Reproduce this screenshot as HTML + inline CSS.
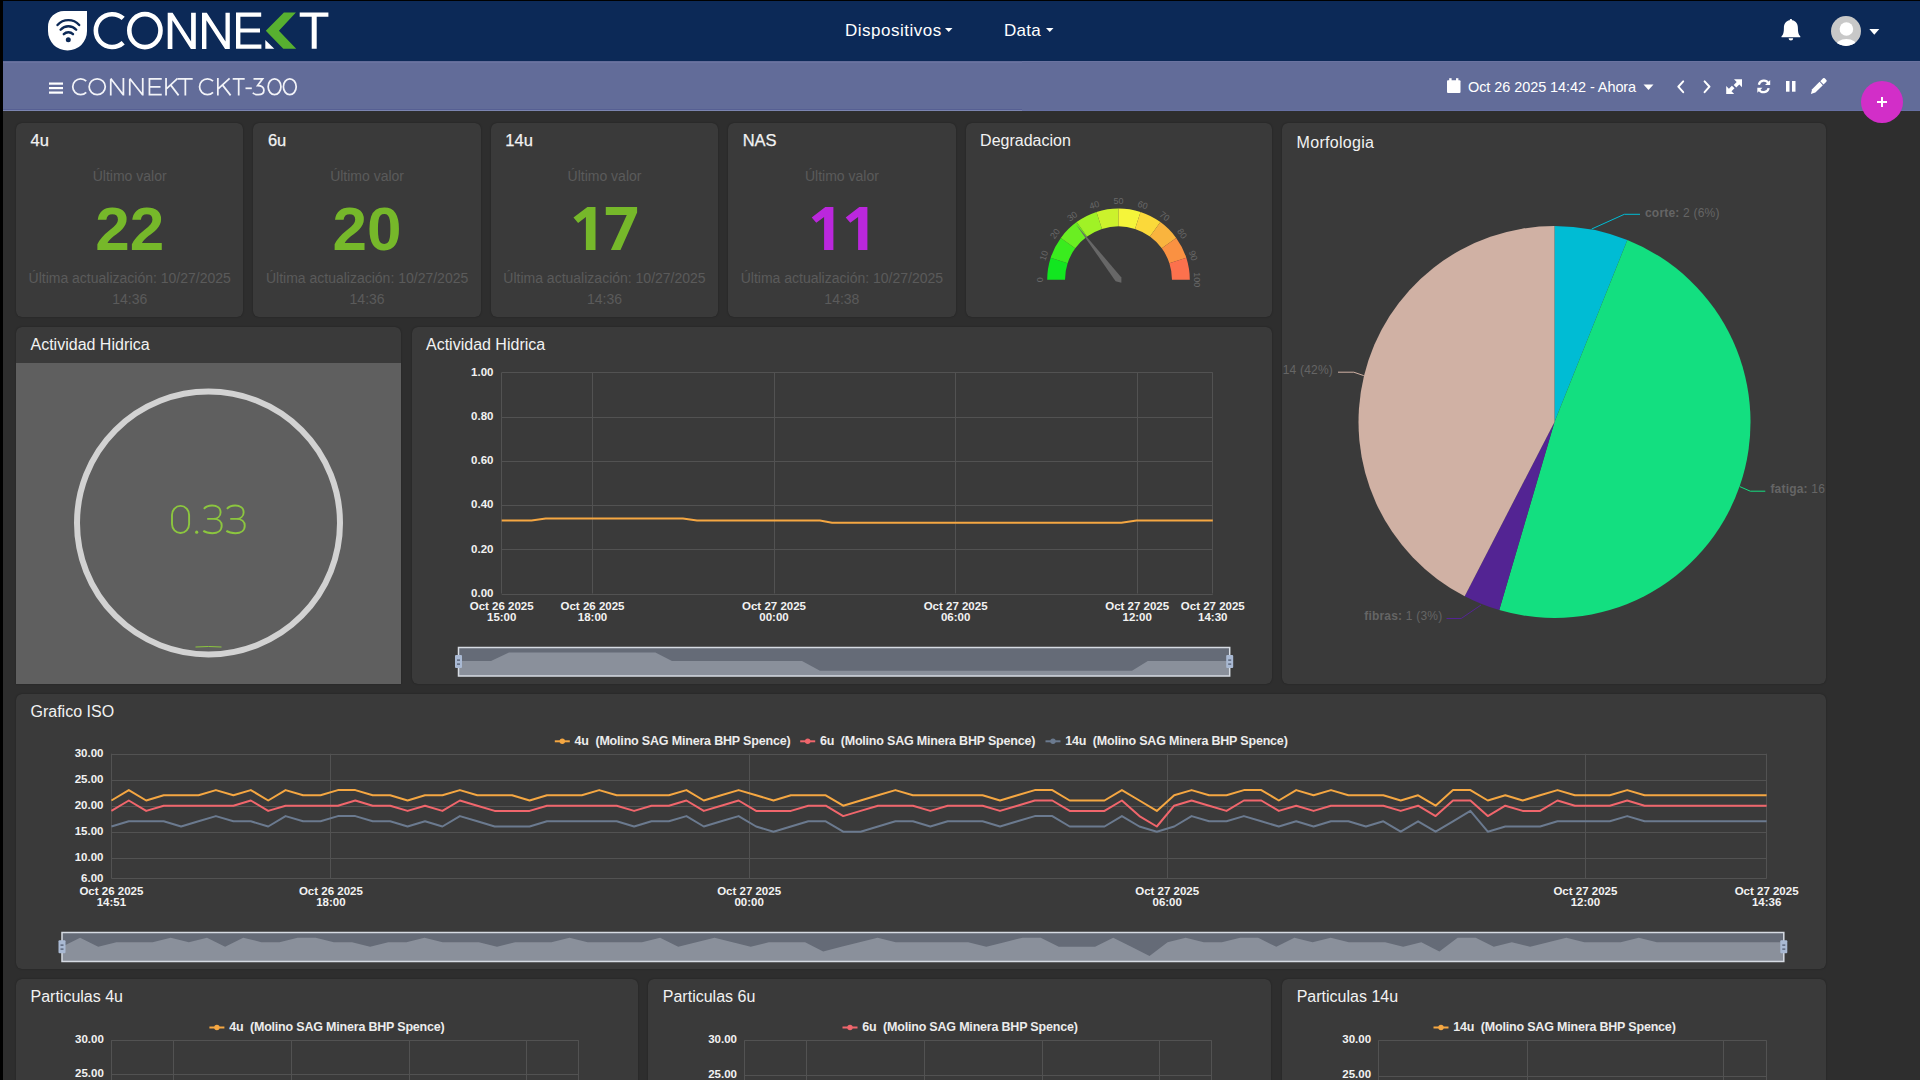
<!DOCTYPE html>
<html><head><meta charset="utf-8"><title>CONNEKT CKT-300</title>
<style>
*{margin:0;padding:0;box-sizing:border-box}
html,body{width:1920px;height:1080px;overflow:hidden;background:#2e2e2e;font-family:"Liberation Sans", sans-serif}
.abs{position:absolute}
.pn{position:absolute;background:#3a3a3a;border-radius:6px;overflow:hidden;box-shadow:0 0 1.5px rgba(0,0,0,0.45)}
.tt{position:absolute;left:14.5px;top:9px;color:#f2f2f2;font-size:16px;white-space:nowrap}
.lbl{position:absolute;color:#5b5b5b;font-size:14px;text-align:center;white-space:nowrap}
svg{position:absolute;left:0;top:0;overflow:visible}
</style></head><body>

<div class="abs" style="left:0;top:0;width:1920px;height:1px;background:#000"></div>
<div class="abs" style="left:0;top:0;width:3px;height:1080px;background:#000"></div>
<div class="abs" style="left:3px;top:1px;width:1917px;height:60px;background:#0c2957"></div>
<div class="abs" style="left:3px;top:61px;width:1917px;height:50px;background:#626c99"></div>
<div class="abs" style="left:3px;top:109px;width:1019px;height:1px;background:#565f93"></div>
<div class="abs" style="left:3px;top:110px;width:1019px;height:1px;background:#7c85b0"></div>
<div class="abs" style="left:1022px;top:110px;width:898px;height:1px;background:#6670a3"></div>
<div class="abs" style="left:3px;top:62px;width:1019px;height:1px;background:#6a73a0"></div>
<div class="abs" style="left:1022px;top:61px;width:898px;height:1px;background:#6a73a0"></div>
<svg width="1920" height="62" style="left:0;top:0">
<path d="M87,10.9 V31.1 A19.5,19.5 0 0 1 48,31.1 V27 A16,16 0 0 1 64,10.9 Z" fill="#fff"/>
<g fill="none" stroke="#0c2957" stroke-width="2.4" stroke-linecap="round">
<path d="M63.8,34.2 A6.5,6.5 0 0 1 73,34.2"/>
<path d="M60.6,29.7 A10.6,10.6 0 0 1 76.2,29.7"/>
<path d="M57.5,25 A14.5,14.5 0 0 1 79.2,25"/>
</g>
<circle cx="68.3" cy="39.7" r="2.5" fill="#0c2957"/>
<g fill="none" stroke="#fff" stroke-width="4.6">
<path d="M123.2,18.4 A16.4,16.4 0 1 0 123.2,42.8"/>
<ellipse cx="144.9" cy="30.6" rx="15.6" ry="16.5"/>
</g>
<g fill="#fff">
<path d="M167.7,49 V12.7 H172.6 L191.1,41.5 V12.7 H195.8 V49 H190.9 L172.4,20.2 V49 Z"/>
<path d="M202,49 V12.7 H206.8 L225.5,41.5 V12.7 H229.8 V49 H225.1 L206.4,20.2 V49 Z"/>
<path d="M236,12.6 H261.2 V16.75 H240.4 V28.5 H260 V32.6 H240.4 V44.4 H261.4 V48.7 H236 Z"/>
<path d="M265.3,40 V48.7 H274.3 Z"/>
<path d="M299.7,12.6 H328.4 V16.75 H316.7 V48.7 H311.7 V16.75 H299.7 Z"/>
</g>
<path d="M283.9,12.6 H295.9 L278.9,30.7 L296.2,48.7 H283.3 L265.8,30.7 Z" fill="#57b030"/>
</svg>
<div class="abs" style="left:845px;top:21px;color:#fff;font-size:17px;letter-spacing:0.5px;white-space:nowrap">Dispositivos</div>
<svg width="10" height="6" style="left:945px;top:28px"><path d="M0,0 H7.5 L3.75,4 Z" fill="#fff"/></svg>
<div class="abs" style="left:1004px;top:21px;color:#fff;font-size:17px;letter-spacing:0.3px;white-space:nowrap">Data</div>
<svg width="10" height="6" style="left:1046px;top:28px"><path d="M0,0 H7.5 L3.75,4 Z" fill="#fff"/></svg>
<svg width="30" height="30" style="left:1776px;top:16px">
<path d="M14.9,3 C15.6,3 16.1,3.5 16.1,4.2 C20.2,4.9 21.9,8 21.9,12 C21.9,16.3 22.4,18.6 24.3,20.3 V21.2 H5.5 V20.3 C7.4,18.6 7.9,16.3 7.9,12 C7.9,8 9.6,4.9 13.7,4.2 C13.7,3.5 14.2,3 14.9,3 Z" fill="#fff"/>
<path d="M12.6,22.2 H17.2 A2.3,2.3 0 0 1 12.6,22.2 Z" fill="#fff"/>
</svg>
<svg width="32" height="32" style="left:1830px;top:15px">
<defs><clipPath id="avc"><circle cx="16" cy="16" r="15"/></clipPath></defs>
<circle cx="16" cy="16" r="15" fill="#c8c8c8"/>
<g clip-path="url(#avc)" fill="#fff">
<circle cx="16.4" cy="14" r="6.8"/>
<ellipse cx="16.4" cy="31.6" rx="11" ry="7.7"/>
</g></svg>
<svg width="12" height="8" style="left:1869px;top:29px"><path d="M0.3,0 H10.3 L5.3,5.8 Z" fill="#fff"/></svg>
<svg width="30" height="30" style="left:44px;top:77px">
<rect x="5" y="5.5" width="14" height="2.2" fill="#fff"/>
<rect x="5" y="10" width="14" height="2.2" fill="#fff"/>
<rect x="5" y="14.5" width="14" height="2.2" fill="#fff"/>
</svg>
<svg width="320" height="111" style="left:0;top:0">
<g fill="none" stroke="#f2f3f8" stroke-width="1.75" stroke-linejoin="miter">
<path d="M86.24,81.16 A7.9,7.9 0 1 0 86.24,92.34"/>
<ellipse cx="97.2" cy="86.75" rx="8.05" ry="7.9"/>
<path d="M110.75,95.5 V79.2 M110.75,78.5 L123.4,95 M123.4,95.5 V78"/>
<path d="M129.75,95.5 V79.2 M129.75,78.5 L142.75,95 M142.75,95.5 V78"/>
<path d="M161.75,78.85 H149.45 V94.65 H161.75 M149.45,86.75 H160.5"/>
<path d="M166.05,78 V95.5 M177.6,78.3 L166.6,88.6 M170.6,84.9 L178.6,95.4"/>
<path d="M178,78.85 H192.7 M185.35,78.85 V95.5"/>
<path d="M213.04,81.16 A7.9,7.9 0 1 0 213.04,92.34"/>
<path d="M217.85,78 V95.5 M229.6,78.3 L218.4,88.6 M222.4,84.9 L230.6,95.4"/>
<path d="M232.7,78.85 H244.7 M238.7,78.85 V95.5"/>
<path d="M245.5,88.3 H251.8"/>
<path d="M253.5,78.85 H262.6 L257.6,85.6 C261.5,85.6 263.9,87.6 263.9,90.3 C263.9,93.2 261.5,94.7 258.3,94.7 C255.9,94.7 253.9,94 252.8,92.7"/>
<ellipse cx="274.55" cy="86.75" rx="6.4" ry="7.9"/>
<ellipse cx="289.8" cy="86.75" rx="6.4" ry="7.9"/>
</g></svg>
<svg width="16" height="18" style="left:1446px;top:77px">
<rect x="1" y="3.3" width="13.5" height="12.6" rx="1" fill="#fff"/>
<rect x="3.2" y="1.2" width="2.4" height="3" fill="#fff"/><rect x="10" y="1.2" width="2.4" height="3" fill="#fff"/>
</svg>
<div class="abs" style="left:1468px;top:79px;color:#fff;font-size:14.5px;letter-spacing:-0.08px;white-space:nowrap">Oct 26 2025 14:42 - Ahora</div>
<svg width="12" height="8" style="left:1643px;top:84px"><path d="M0.5,0.5 H10.5 L5.5,6 Z" fill="#fff"/></svg>
<svg width="200" height="30" style="left:1670px;top:72px">
<g fill="none" stroke="#fff" stroke-width="2" stroke-linecap="round" stroke-linejoin="round">
<path d="M13.2,9.4 L8.3,14.7 L13.2,20.2"/>
<path d="M34.6,9.4 L39.5,14.7 L34.6,20.2"/>
</g>
<g fill="#fff">
<path d="M64,7.2 H72 V15.2 L69.3,12.5 L66.3,15.5 L63.7,12.9 L66.7,9.9 Z"/>
<path d="M56.2,22 V14 L58.9,16.7 L61.9,13.7 L64.5,16.3 L61.5,19.3 L64.2,22 Z"/>
</g>
<g transform="translate(93.75,14.4) scale(0.86) translate(-93,-15)">
<g fill="none" stroke="#fff" stroke-width="2.6">
<path d="M87.3,13 A6,6 0 0 1 98.5,11.5"/>
<path d="M98.7,17 A6,6 0 0 1 87.5,18.5"/>
</g>
<g fill="#fff">
<path d="M100.5,7.5 V13.5 H94.5 Z"/>
<path d="M85.5,22.5 V16.5 H91.5 Z"/>
</g>
</g>
<g fill="#fff">
<rect x="116" y="9" width="3.5" height="10.7"/>
<rect x="122" y="9" width="3.5" height="10.7"/>
<path d="M140.9,22 L142.14,17.3 L149.57,9.87 L152.83,13.13 L145.4,20.56 Z"/>
<path d="M150.27,9.17 L153.07,6.37 A1.2,1.2 0 0 1 154.8,6.37 L156.33,7.9 A1.2,1.2 0 0 1 156.33,9.63 L153.53,12.43 Z"/>
</g>
</svg>
<div class="abs" style="left:1861px;top:81px;width:42px;height:42px;border-radius:50%;background:#d22ec8"></div>
<svg width="42" height="42" style="left:1861px;top:81px"><rect x="16" y="20" width="10" height="2" fill="#fff"/><rect x="20" y="16" width="2" height="10" fill="#fff"/></svg>
<div class="pn" style="left:16px;top:123px;width:227.4px;height:194px;">
<div class="tt" style="font-size:16.5px;top:7.5px;-webkit-text-stroke:0.25px #f2f2f2">4u</div>
<div class="lbl" style="left:0;width:227.4px;top:45px">Último valor</div>
<div class="lbl" style="left:0;width:227.4px;top:71px;font-size:62px;font-weight:bold;color:#76b82a;line-height:70px">22</div>
<div class="lbl" style="left:0;width:227.4px;top:145px;line-height:21px">Última actualización: 10/27/2025<br>14:36</div>
</div>
<div class="pn" style="left:253.4px;top:123px;width:227.4px;height:194px;">
<div class="tt" style="font-size:16.5px;top:7.5px;-webkit-text-stroke:0.25px #f2f2f2">6u</div>
<div class="lbl" style="left:0;width:227.4px;top:45px">Último valor</div>
<div class="lbl" style="left:0;width:227.4px;top:71px;font-size:62px;font-weight:bold;color:#76b82a;line-height:70px">20</div>
<div class="lbl" style="left:0;width:227.4px;top:145px;line-height:21px">Última actualización: 10/27/2025<br>14:36</div>
</div>
<div class="pn" style="left:490.8px;top:123px;width:227.4px;height:194px;">
<div class="tt" style="font-size:16.5px;top:7.5px;-webkit-text-stroke:0.25px #f2f2f2">14u</div>
<div class="lbl" style="left:0;width:227.4px;top:45px">Último valor</div>
<div class="lbl" style="left:0;width:227.4px;top:145px;line-height:21px">Última actualización: 10/27/2025<br>14:36</div>
</div>
<div class="pn" style="left:728.2px;top:123px;width:227.4px;height:194px;">
<div class="tt" style="font-size:16.5px;top:7.5px;-webkit-text-stroke:0.25px #f2f2f2">NAS</div>
<div class="lbl" style="left:0;width:227.4px;top:45px">Último valor</div>
<div class="lbl" style="left:0;width:227.4px;top:145px;line-height:21px">Última actualización: 10/27/2025<br>14:38</div>
</div>
<svg width="1920" height="300" style="left:0;top:0"><polygon points="825.3,207.0 833.4,207.0 833.4,249.9 824.1,249.9 824.1,217.0 816.3,222.8 811.7,217.6" fill="#bb27dd"/><polygon points="859.3,207.0 867.4,207.0 867.4,249.9 858.1,249.9 858.1,217.0 850.3,222.8 845.7,217.6" fill="#bb27dd"/><polygon points="587.4,207 595.5,207 595.5,249.9 585.9,249.9 585.9,217 578.1,223 573.5,217.6" fill="#76b82a"/><polygon points="605.8,207 637.1,207 637.1,212.5 620.5,249.9 610.9,249.9 626.8,214.9 605.8,214.9" fill="#76b82a"/></svg>
<div class="pn" style="left:965.6px;top:123px;width:306.4px;height:194px;">
<div class="tt">Degradacion</div>
</div>
<svg width="1920" height="1080" style="left:0;top:0">
<path d="M1047.20,279.80 A71.3,71.3 0 0 1 1050.69,257.77 L1067.62,263.27 A53.5,53.5 0 0 0 1065.00,279.80 Z" fill="#12e620"/>
<path d="M1050.69,257.77 A71.3,71.3 0 0 1 1060.82,237.89 L1075.22,248.35 A53.5,53.5 0 0 0 1067.62,263.27 Z" fill="#3aec1e"/>
<path d="M1060.82,237.89 A71.3,71.3 0 0 1 1076.59,222.12 L1087.05,236.52 A53.5,53.5 0 0 0 1075.22,248.35 Z" fill="#6aee22"/>
<path d="M1076.59,222.12 A71.3,71.3 0 0 1 1096.47,211.99 L1101.97,228.92 A53.5,53.5 0 0 0 1087.05,236.52 Z" fill="#a0f226"/>
<path d="M1096.47,211.99 A71.3,71.3 0 0 1 1118.50,208.50 L1118.50,226.30 A53.5,53.5 0 0 0 1101.97,228.92 Z" fill="#cbf22c"/>
<path d="M1118.50,208.50 A71.3,71.3 0 0 1 1140.53,211.99 L1135.03,228.92 A53.5,53.5 0 0 0 1118.50,226.30 Z" fill="#f5f53a"/>
<path d="M1140.53,211.99 A71.3,71.3 0 0 1 1160.41,222.12 L1149.95,236.52 A53.5,53.5 0 0 0 1135.03,228.92 Z" fill="#fbd93a"/>
<path d="M1160.41,222.12 A71.3,71.3 0 0 1 1176.18,237.89 L1161.78,248.35 A53.5,53.5 0 0 0 1149.95,236.52 Z" fill="#f9b43e"/>
<path d="M1176.18,237.89 A71.3,71.3 0 0 1 1186.31,257.77 L1169.38,263.27 A53.5,53.5 0 0 0 1161.78,248.35 Z" fill="#fa9142"/>
<path d="M1186.31,257.77 A71.3,71.3 0 0 1 1189.80,279.80 L1172.00,279.80 A53.5,53.5 0 0 0 1169.38,263.27 Z" fill="#fc714d"/>
<text x="1040.00" y="279.80" transform="rotate(-90.0 1040.00 279.80)" text-anchor="middle" dominant-baseline="central" font-size="9" fill="#686868" font-family='Liberation Sans, sans-serif'>0</text>
<text x="1043.84" y="255.54" transform="rotate(-72.0 1043.84 255.54)" text-anchor="middle" dominant-baseline="central" font-size="9" fill="#686868" font-family='Liberation Sans, sans-serif'>10</text>
<text x="1054.99" y="233.66" transform="rotate(-54.0 1054.99 233.66)" text-anchor="middle" dominant-baseline="central" font-size="9" fill="#686868" font-family='Liberation Sans, sans-serif'>20</text>
<text x="1072.36" y="216.29" transform="rotate(-36.0 1072.36 216.29)" text-anchor="middle" dominant-baseline="central" font-size="9" fill="#686868" font-family='Liberation Sans, sans-serif'>30</text>
<text x="1094.24" y="205.14" transform="rotate(-18.0 1094.24 205.14)" text-anchor="middle" dominant-baseline="central" font-size="9" fill="#686868" font-family='Liberation Sans, sans-serif'>40</text>
<text x="1118.50" y="201.30" transform="rotate(-0.0 1118.50 201.30)" text-anchor="middle" dominant-baseline="central" font-size="9" fill="#686868" font-family='Liberation Sans, sans-serif'>50</text>
<text x="1142.76" y="205.14" transform="rotate(18.0 1142.76 205.14)" text-anchor="middle" dominant-baseline="central" font-size="9" fill="#686868" font-family='Liberation Sans, sans-serif'>60</text>
<text x="1164.64" y="216.29" transform="rotate(36.0 1164.64 216.29)" text-anchor="middle" dominant-baseline="central" font-size="9" fill="#686868" font-family='Liberation Sans, sans-serif'>70</text>
<text x="1182.01" y="233.66" transform="rotate(54.0 1182.01 233.66)" text-anchor="middle" dominant-baseline="central" font-size="9" fill="#686868" font-family='Liberation Sans, sans-serif'>80</text>
<text x="1193.16" y="255.54" transform="rotate(72.0 1193.16 255.54)" text-anchor="middle" dominant-baseline="central" font-size="9" fill="#686868" font-family='Liberation Sans, sans-serif'>90</text>
<text x="1197.00" y="279.80" transform="rotate(90.0 1197.00 279.80)" text-anchor="middle" dominant-baseline="central" font-size="9" fill="#686868" font-family='Liberation Sans, sans-serif'>100</text>
<path d="M1075.9,224.2 L1121.4,277.4 L1121.4,282.8 L1115.6,281.2 Z" fill="#676767"/>
</svg>
<div class="pn" style="left:1282.1px;top:123px;width:543.8px;height:561px;">
<div class="tt" style="top:10.5px;letter-spacing:0.3px">Morfologia</div>
</div>
<div class="pn" style="left:16px;top:327px;width:385.4px;height:357px;border-radius:6px 6px 0 0">
<div class="tt">Actividad Hidrica</div>
<div class="abs" style="left:0;top:36px;width:100%;height:400px;background:#5f5f5f"></div>
</div>
<div class="pn" style="left:411.5px;top:327px;width:860.5px;height:357px;">
<div class="tt">Actividad Hidrica</div>
</div>
<div class="pn" style="left:16px;top:694px;width:1810px;height:275px;">
<div class="tt">Grafico ISO</div>
</div>
<div class="pn" style="left:16px;top:979px;width:621.8px;height:221px;">
<div class="tt">Particulas 4u</div>
</div>
<div class="pn" style="left:648.3px;top:979px;width:622.9px;height:221px;">
<div class="tt">Particulas 6u</div>
</div>
<div class="pn" style="left:1282.2px;top:979px;width:543.7px;height:221px;">
<div class="tt">Particulas 14u</div>
</div>
<svg width="1920" height="1080" style="left:0;top:0" font-family="Liberation Sans, sans-serif">
<circle cx="208.5" cy="523" r="131.5" fill="none" stroke="#d2d2d2" stroke-width="6"/>
<g fill="none" stroke="#8cc63f" stroke-width="1.9"><rect x="172" y="505.9" width="17.1" height="27.1" rx="8.5" ry="9"/><path d="M203.9,508.9 C206,506.2 209,505.5 212.2,505.5 C217,505.5 220.6,508 220.6,512.2 C220.6,516.4 217.3,518.9 213.3,518.9 L207.2,518.9 M213.3,518.9 C218.5,518.9 221.7,521.6 221.7,525.8 C221.7,530.4 217.8,533.2 212.4,533.2 C208.6,533.2 205.3,532.3 203.3,530.9"/><path d="M203.9,508.9 C206,506.2 209,505.5 212.2,505.5 C217,505.5 220.6,508 220.6,512.2 C220.6,516.4 217.3,518.9 213.3,518.9 L207.2,518.9 M213.3,518.9 C218.5,518.9 221.7,521.6 221.7,525.8 C221.7,530.4 217.8,533.2 212.4,533.2 C208.6,533.2 205.3,532.3 203.3,530.9" transform="translate(23.05 0)"/></g><circle cx="196.7" cy="532.2" r="1.6" fill="#8cc63f"/>
<path d="M195.5,647 Q208.5,646 221.5,647" stroke="#8cc63f" stroke-width="1" fill="none"/>
<line x1="501.7" y1="372.5" x2="1212.8" y2="372.5" stroke="#525252" stroke-width="1"/>
<text x="493.5" y="371.7" text-anchor="end" dominant-baseline="central" font-size="11.5" font-weight="bold" fill="#f2f2f2">1.00</text>
<line x1="501.7" y1="417.5" x2="1212.8" y2="417.5" stroke="#525252" stroke-width="1"/>
<text x="493.5" y="415.9" text-anchor="end" dominant-baseline="central" font-size="11.5" font-weight="bold" fill="#f2f2f2">0.80</text>
<line x1="501.7" y1="461.5" x2="1212.8" y2="461.5" stroke="#525252" stroke-width="1"/>
<text x="493.5" y="460.1" text-anchor="end" dominant-baseline="central" font-size="11.5" font-weight="bold" fill="#f2f2f2">0.60</text>
<line x1="501.7" y1="505.5" x2="1212.8" y2="505.5" stroke="#525252" stroke-width="1"/>
<text x="493.5" y="504.3" text-anchor="end" dominant-baseline="central" font-size="11.5" font-weight="bold" fill="#f2f2f2">0.40</text>
<line x1="501.7" y1="549.5" x2="1212.8" y2="549.5" stroke="#525252" stroke-width="1"/>
<text x="493.5" y="548.5" text-anchor="end" dominant-baseline="central" font-size="11.5" font-weight="bold" fill="#f2f2f2">0.20</text>
<line x1="501.7" y1="594.5" x2="1212.8" y2="594.5" stroke="#525252" stroke-width="1"/>
<text x="493.5" y="592.7" text-anchor="end" dominant-baseline="central" font-size="11.5" font-weight="bold" fill="#f2f2f2">0.00</text>
<line x1="501.5" y1="372.5" x2="501.5" y2="593.5" stroke="#525252" stroke-width="1"/>
<text x="501.7" y="610" text-anchor="middle" font-size="11.5" font-weight="bold" fill="#f2f2f2">Oct 26 2025</text>
<text x="501.7" y="621" text-anchor="middle" font-size="11.5" font-weight="bold" fill="#f2f2f2">15:00</text>
<line x1="592.5" y1="372.5" x2="592.5" y2="593.5" stroke="#525252" stroke-width="1"/>
<text x="592.5" y="610" text-anchor="middle" font-size="11.5" font-weight="bold" fill="#f2f2f2">Oct 26 2025</text>
<text x="592.5" y="621" text-anchor="middle" font-size="11.5" font-weight="bold" fill="#f2f2f2">18:00</text>
<line x1="774.5" y1="372.5" x2="774.5" y2="593.5" stroke="#525252" stroke-width="1"/>
<text x="774.0" y="610" text-anchor="middle" font-size="11.5" font-weight="bold" fill="#f2f2f2">Oct 27 2025</text>
<text x="774.0" y="621" text-anchor="middle" font-size="11.5" font-weight="bold" fill="#f2f2f2">00:00</text>
<line x1="955.5" y1="372.5" x2="955.5" y2="593.5" stroke="#525252" stroke-width="1"/>
<text x="955.6" y="610" text-anchor="middle" font-size="11.5" font-weight="bold" fill="#f2f2f2">Oct 27 2025</text>
<text x="955.6" y="621" text-anchor="middle" font-size="11.5" font-weight="bold" fill="#f2f2f2">06:00</text>
<line x1="1137.5" y1="372.5" x2="1137.5" y2="593.5" stroke="#525252" stroke-width="1"/>
<text x="1137.2" y="610" text-anchor="middle" font-size="11.5" font-weight="bold" fill="#f2f2f2">Oct 27 2025</text>
<text x="1137.2" y="621" text-anchor="middle" font-size="11.5" font-weight="bold" fill="#f2f2f2">12:00</text>
<line x1="1212.5" y1="372.5" x2="1212.5" y2="593.5" stroke="#525252" stroke-width="1"/>
<text x="1212.8" y="610" text-anchor="middle" font-size="11.5" font-weight="bold" fill="#f2f2f2">Oct 27 2025</text>
<text x="1212.8" y="621" text-anchor="middle" font-size="11.5" font-weight="bold" fill="#f2f2f2">14:30</text>
<polyline points="501.7,520.6 531.6,520.6 545.7,518.4 683.0,518.4 697.0,520.6 820.0,520.6 832.0,522.8 1121.4,522.8 1136.5,520.6 1212.8,520.6" fill="none" stroke="#f5a742" stroke-width="2"/>
<rect x="458.5" y="647.5" width="771.2" height="28.5" fill="#656b77"/>
<polygon points="458.5,661.0 491.0,661.0 509.0,652.4 655.4,652.4 672.0,661.0 802.0,661.0 820.0,670.7 1132.0,670.7 1147.8,661.0 1229.7,661.0 1229.7,676.0 458.5,676.0" fill="#8a909b"/>
<rect x="458.5" y="647.5" width="771.2" height="28.5" fill="none" stroke="#d6dbe3" stroke-width="1.5"/>
<rect x="455.0" y="655" width="7" height="13" rx="1" fill="#a9b9d3"/>
<rect x="457.0" y="659.5" width="3" height="1.2" fill="#4a5468"/><rect x="457.0" y="663.5" width="3" height="1.2" fill="#4a5468"/>
<rect x="1226.2" y="655" width="7" height="13" rx="1" fill="#a9b9d3"/>
<rect x="1228.2" y="659.5" width="3" height="1.2" fill="#4a5468"/><rect x="1228.2" y="663.5" width="3" height="1.2" fill="#4a5468"/>
<path d="M1554.5,422.0 L1554.50,226.00 A196,196 0 0 1 1627.35,240.04 Z" fill="#00bcd4"/>
<path d="M1554.5,422.0 L1627.35,240.04 A196,196 0 0 1 1499.28,610.06 Z" fill="#13df80"/>
<path d="M1554.5,422.0 L1499.28,610.06 A196,196 0 0 1 1464.69,596.21 Z" fill="#532493"/>
<path d="M1554.5,422.0 L1464.69,596.21 A196,196 0 0 1 1554.50,226.00 Z" fill="#d0b1a4"/>
<polyline points="1591.7,229 1624.3,214.3 1640,214.3" fill="none" stroke="#00bcd4" stroke-width="1"/>
<polyline points="1739.8,486.6 1750.3,491.2 1765.3,491.2" fill="none" stroke="#13df80" stroke-width="1"/>
<polyline points="1481,605 1461.2,618.5 1446.5,618.5" fill="none" stroke="#532493" stroke-width="1"/>
<polyline points="1363.75,375.6 1353.8,372.2 1338,372.2" fill="none" stroke="#d0b1a4" stroke-width="1"/>
<text x="1645" y="216.6" font-size="12" fill="#656565" letter-spacing="0.2"><tspan font-weight="bold">corte:</tspan> 2 (6%)</text>
<text x="1364.2" y="620" font-size="12" fill="#656565" letter-spacing="0.2"><tspan font-weight="bold">fibras:</tspan> 1 (3%)</text>
<defs><clipPath id="pieclip"><rect x="1282" y="123" width="544" height="560"/></clipPath></defs><g clip-path="url(#pieclip)">
<text x="1333" y="374" font-size="12" fill="#656565" text-anchor="end" letter-spacing="0.2">14 (42%)</text>
<text x="1770.4" y="493" font-size="12" fill="#656565" letter-spacing="0.2"><tspan font-weight="bold">fatiga:</tspan> 16 (48%)</text>
</g>
<line x1="111.4" y1="754.5" x2="1766.6" y2="754.5" stroke="#525252" stroke-width="1"/>
<text x="103.5" y="752.9" text-anchor="end" dominant-baseline="central" font-size="11.5" font-weight="bold" fill="#f2f2f2">30.00</text>
<line x1="111.4" y1="780.5" x2="1766.6" y2="780.5" stroke="#525252" stroke-width="1"/>
<text x="103.5" y="778.9" text-anchor="end" dominant-baseline="central" font-size="11.5" font-weight="bold" fill="#f2f2f2">25.00</text>
<line x1="111.4" y1="806.5" x2="1766.6" y2="806.5" stroke="#525252" stroke-width="1"/>
<text x="103.5" y="804.9" text-anchor="end" dominant-baseline="central" font-size="11.5" font-weight="bold" fill="#f2f2f2">20.00</text>
<line x1="111.4" y1="832.5" x2="1766.6" y2="832.5" stroke="#525252" stroke-width="1"/>
<text x="103.5" y="830.9" text-anchor="end" dominant-baseline="central" font-size="11.5" font-weight="bold" fill="#f2f2f2">15.00</text>
<line x1="111.4" y1="858.5" x2="1766.6" y2="858.5" stroke="#525252" stroke-width="1"/>
<text x="103.5" y="856.9" text-anchor="end" dominant-baseline="central" font-size="11.5" font-weight="bold" fill="#f2f2f2">10.00</text>
<line x1="111.4" y1="878.5" x2="1766.6" y2="878.5" stroke="#525252" stroke-width="1"/>
<text x="103.5" y="877.7" text-anchor="end" dominant-baseline="central" font-size="11.5" font-weight="bold" fill="#f2f2f2">6.00</text>
<line x1="111.5" y1="753.7" x2="111.5" y2="878.5" stroke="#525252" stroke-width="1"/>
<text x="111.4" y="895" text-anchor="middle" font-size="11.5" font-weight="bold" fill="#f2f2f2">Oct 26 2025</text>
<text x="111.4" y="906" text-anchor="middle" font-size="11.5" font-weight="bold" fill="#f2f2f2">14:51</text>
<line x1="330.5" y1="753.7" x2="330.5" y2="878.5" stroke="#525252" stroke-width="1"/>
<text x="330.9" y="895" text-anchor="middle" font-size="11.5" font-weight="bold" fill="#f2f2f2">Oct 26 2025</text>
<text x="330.9" y="906" text-anchor="middle" font-size="11.5" font-weight="bold" fill="#f2f2f2">18:00</text>
<line x1="749.5" y1="753.7" x2="749.5" y2="878.5" stroke="#525252" stroke-width="1"/>
<text x="749.1" y="895" text-anchor="middle" font-size="11.5" font-weight="bold" fill="#f2f2f2">Oct 27 2025</text>
<text x="749.1" y="906" text-anchor="middle" font-size="11.5" font-weight="bold" fill="#f2f2f2">00:00</text>
<line x1="1167.5" y1="753.7" x2="1167.5" y2="878.5" stroke="#525252" stroke-width="1"/>
<text x="1167.2" y="895" text-anchor="middle" font-size="11.5" font-weight="bold" fill="#f2f2f2">Oct 27 2025</text>
<text x="1167.2" y="906" text-anchor="middle" font-size="11.5" font-weight="bold" fill="#f2f2f2">06:00</text>
<line x1="1585.5" y1="753.7" x2="1585.5" y2="878.5" stroke="#525252" stroke-width="1"/>
<text x="1585.4" y="895" text-anchor="middle" font-size="11.5" font-weight="bold" fill="#f2f2f2">Oct 27 2025</text>
<text x="1585.4" y="906" text-anchor="middle" font-size="11.5" font-weight="bold" fill="#f2f2f2">12:00</text>
<line x1="1766.5" y1="753.7" x2="1766.5" y2="878.5" stroke="#525252" stroke-width="1"/>
<text x="1766.6" y="895" text-anchor="middle" font-size="11.5" font-weight="bold" fill="#f2f2f2">Oct 27 2025</text>
<text x="1766.6" y="906" text-anchor="middle" font-size="11.5" font-weight="bold" fill="#f2f2f2">14:36</text>
<polyline points="111.4,826.5 128.8,821.3 146.2,821.3 163.7,821.3 181.1,826.5 198.5,821.3 215.9,816.1 233.4,821.3 250.8,821.3 268.2,826.5 285.6,816.1 303.1,821.3 320.5,821.3 337.9,816.1 355.3,816.1 372.7,821.3 390.2,821.3 407.6,826.5 425.0,821.3 442.4,826.5 459.9,816.1 477.3,821.3 494.7,826.5 512.1,826.5 529.6,826.5 547.0,821.3 564.4,821.3 581.8,821.3 599.2,821.3 616.7,821.3 634.1,826.5 651.5,821.3 668.9,821.3 686.4,816.1 703.8,826.5 721.2,821.3 738.6,816.1 756.1,826.5 773.5,831.7 790.9,826.5 808.3,821.3 825.7,821.3 843.2,831.7 860.6,831.7 878.0,826.5 895.4,821.3 912.9,821.3 930.3,826.5 947.7,821.3 965.1,821.3 982.6,821.3 1000.0,826.5 1017.4,821.3 1034.8,816.1 1052.3,816.1 1069.7,826.5 1087.1,826.5 1104.5,826.5 1121.9,816.1 1139.4,826.5 1156.8,831.7 1174.2,826.5 1191.6,816.1 1209.1,821.3 1226.5,821.3 1243.9,816.1 1261.3,821.3 1278.8,826.5 1296.2,821.3 1313.6,826.5 1331.0,821.3 1348.4,821.3 1365.9,826.5 1383.3,821.3 1400.7,831.7 1418.1,821.3 1435.6,831.7 1453.0,821.3 1470.4,810.9 1487.8,831.7 1505.3,826.5 1522.7,826.5 1540.1,826.5 1557.5,821.3 1574.9,821.3 1592.4,821.3 1609.8,821.3 1627.2,816.1 1644.6,821.3 1662.1,821.3 1679.5,821.3 1696.9,821.3 1714.3,821.3 1731.8,821.3 1749.2,821.3 1766.6,821.3" fill="none" stroke="#6b7a8f" stroke-width="2" stroke-linejoin="round"/>
<polyline points="111.4,810.9 128.8,800.5 146.2,810.9 163.7,805.7 181.1,805.7 198.5,805.7 215.9,805.7 233.4,805.7 250.8,800.5 268.2,810.9 285.6,805.7 303.1,805.7 320.5,805.7 337.9,805.7 355.3,800.5 372.7,805.7 390.2,805.7 407.6,810.9 425.0,805.7 442.4,810.9 459.9,800.5 477.3,805.7 494.7,810.9 512.1,810.9 529.6,810.9 547.0,805.7 564.4,805.7 581.8,805.7 599.2,805.7 616.7,805.7 634.1,810.9 651.5,805.7 668.9,805.7 686.4,800.5 703.8,810.9 721.2,805.7 738.6,800.5 756.1,810.9 773.5,810.9 790.9,810.9 808.3,805.7 825.7,805.7 843.2,816.1 860.6,810.9 878.0,805.7 895.4,805.7 912.9,805.7 930.3,810.9 947.7,805.7 965.1,805.7 982.6,805.7 1000.0,810.9 1017.4,805.7 1034.8,800.5 1052.3,800.5 1069.7,810.9 1087.1,810.9 1104.5,810.9 1121.9,800.5 1139.4,816.1 1156.8,826.5 1174.2,805.7 1191.6,800.5 1209.1,805.7 1226.5,810.9 1243.9,800.5 1261.3,800.5 1278.8,810.9 1296.2,805.7 1313.6,810.9 1331.0,805.7 1348.4,805.7 1365.9,805.7 1383.3,805.7 1400.7,810.9 1418.1,805.7 1435.6,816.1 1453.0,800.5 1470.4,800.5 1487.8,816.1 1505.3,805.7 1522.7,810.9 1540.1,810.9 1557.5,800.5 1574.9,805.7 1592.4,805.7 1609.8,805.7 1627.2,800.5 1644.6,805.7 1662.1,805.7 1679.5,805.7 1696.9,805.7 1714.3,805.7 1731.8,805.7 1749.2,805.7 1766.6,805.7" fill="none" stroke="#f0666c" stroke-width="2" stroke-linejoin="round"/>
<polyline points="111.4,800.5 128.8,790.1 146.2,800.5 163.7,795.3 181.1,795.3 198.5,795.3 215.9,790.1 233.4,795.3 250.8,790.1 268.2,800.5 285.6,790.1 303.1,795.3 320.5,795.3 337.9,790.1 355.3,790.1 372.7,795.3 390.2,795.3 407.6,800.5 425.0,795.3 442.4,795.3 459.9,790.1 477.3,795.3 494.7,795.3 512.1,795.3 529.6,800.5 547.0,795.3 564.4,795.3 581.8,795.3 599.2,790.1 616.7,795.3 634.1,795.3 651.5,795.3 668.9,795.3 686.4,790.1 703.8,800.5 721.2,795.3 738.6,790.1 756.1,795.3 773.5,800.5 790.9,795.3 808.3,795.3 825.7,795.3 843.2,805.7 860.6,800.5 878.0,795.3 895.4,790.1 912.9,795.3 930.3,795.3 947.7,795.3 965.1,795.3 982.6,795.3 1000.0,800.5 1017.4,795.3 1034.8,790.1 1052.3,790.1 1069.7,800.5 1087.1,800.5 1104.5,800.5 1121.9,790.1 1139.4,800.5 1156.8,810.9 1174.2,795.3 1191.6,790.1 1209.1,795.3 1226.5,795.3 1243.9,790.1 1261.3,790.1 1278.8,800.5 1296.2,790.1 1313.6,795.3 1331.0,790.1 1348.4,795.3 1365.9,795.3 1383.3,795.3 1400.7,800.5 1418.1,795.3 1435.6,805.7 1453.0,790.1 1470.4,790.1 1487.8,800.5 1505.3,795.3 1522.7,800.5 1540.1,795.3 1557.5,790.1 1574.9,795.3 1592.4,795.3 1609.8,795.3 1627.2,790.1 1644.6,795.3 1662.1,795.3 1679.5,795.3 1696.9,795.3 1714.3,795.3 1731.8,795.3 1749.2,795.3 1766.6,795.3" fill="none" stroke="#f5a742" stroke-width="2" stroke-linejoin="round"/>
<line x1="554.8" y1="741.3" x2="569.8" y2="741.3" stroke="#f5a742" stroke-width="2"/><circle cx="562.3" cy="741.3" r="2.7" fill="#f5a742"/><text x="574.6" y="744.7" font-size="12.5" font-weight="bold" fill="#ececec" xml:space="preserve" textLength="216.0" lengthAdjust="spacing">4u  (Molino SAG Minera BHP Spence)</text>
<line x1="800.2" y1="741.3" x2="815.2" y2="741.3" stroke="#f0666c" stroke-width="2"/><circle cx="807.7" cy="741.3" r="2.7" fill="#f0666c"/><text x="820.0" y="744.7" font-size="12.5" font-weight="bold" fill="#ececec" xml:space="preserve" textLength="215.3" lengthAdjust="spacing">6u  (Molino SAG Minera BHP Spence)</text>
<line x1="1045.5" y1="741.3" x2="1060.5" y2="741.3" stroke="#6b7a8f" stroke-width="2"/><circle cx="1053.0" cy="741.3" r="2.7" fill="#6b7a8f"/><text x="1065.3" y="744.7" font-size="12.5" font-weight="bold" fill="#ececec" xml:space="preserve" textLength="222.5" lengthAdjust="spacing">14u  (Molino SAG Minera BHP Spence)</text>
<rect x="62.0" y="932.5" width="1721.8" height="29.0" fill="#656b77"/>
<polygon points="62.0,946.8 80.1,937.7 98.2,946.8 116.4,942.2 134.5,942.2 152.6,942.2 170.7,937.7 188.9,942.2 207.0,937.7 225.1,946.8 243.2,937.7 261.4,942.2 279.5,942.2 297.6,937.7 315.7,937.7 333.9,942.2 352.0,942.2 370.1,946.8 388.2,942.2 406.4,942.2 424.5,937.7 442.6,942.2 460.7,942.2 478.9,942.2 497.0,946.8 515.1,942.2 533.2,942.2 551.4,942.2 569.5,937.7 587.6,942.2 605.7,942.2 623.9,942.2 642.0,942.2 660.1,937.7 678.2,946.8 696.3,942.2 714.5,937.7 732.6,942.2 750.7,946.8 768.8,942.2 787.0,942.2 805.1,942.2 823.2,951.4 841.3,946.8 859.5,942.2 877.6,937.7 895.7,942.2 913.8,942.2 932.0,942.2 950.1,942.2 968.2,942.2 986.3,946.8 1004.5,942.2 1022.6,937.7 1040.7,937.7 1058.8,946.8 1077.0,946.8 1095.1,946.8 1113.2,937.7 1131.3,946.8 1149.5,955.9 1167.6,942.2 1185.7,937.7 1203.8,942.2 1221.9,942.2 1240.1,937.7 1258.2,937.7 1276.3,946.8 1294.4,937.7 1312.6,942.2 1330.7,937.7 1348.8,942.2 1366.9,942.2 1385.1,942.2 1403.2,946.8 1421.3,942.2 1439.4,951.4 1457.6,937.7 1475.7,937.7 1493.8,946.8 1511.9,942.2 1530.1,946.8 1548.2,942.2 1566.3,937.7 1584.4,942.2 1602.6,942.2 1620.7,942.2 1638.8,937.7 1656.9,942.2 1675.1,942.2 1693.2,942.2 1711.3,942.2 1729.4,942.2 1747.6,942.2 1765.7,942.2 1783.8,942.2 1783.8,961.5 62.0,961.5" fill="#8a909b"/>
<rect x="62.0" y="932.5" width="1721.8" height="29.0" fill="none" stroke="#d6dbe3" stroke-width="1.5"/>
<rect x="58.5" y="940.3" width="7" height="13" rx="1" fill="#a9b9d3"/>
<rect x="60.5" y="944.5" width="3" height="1.2" fill="#4a5468"/><rect x="60.5" y="948.5" width="3" height="1.2" fill="#4a5468"/>
<rect x="1780.3" y="940.3" width="7" height="13" rx="1" fill="#a9b9d3"/>
<rect x="1782.3" y="944.5" width="3" height="1.2" fill="#4a5468"/><rect x="1782.3" y="948.5" width="3" height="1.2" fill="#4a5468"/>
<line x1="111.2" y1="1040.5" x2="578.6" y2="1040.5" stroke="#525252" stroke-width="1"/>
<text x="103.8" y="1039.0" text-anchor="end" dominant-baseline="central" font-size="11.5" font-weight="bold" fill="#f2f2f2">30.00</text>
<line x1="111.2" y1="1074.5" x2="578.6" y2="1074.5" stroke="#525252" stroke-width="1"/>
<text x="103.8" y="1073.1" text-anchor="end" dominant-baseline="central" font-size="11.5" font-weight="bold" fill="#f2f2f2">25.00</text>
<line x1="111.5" y1="1040.25" x2="111.5" y2="1080" stroke="#525252" stroke-width="1"/>
<line x1="173.5" y1="1040.25" x2="173.5" y2="1080" stroke="#525252" stroke-width="1"/>
<line x1="291.5" y1="1040.25" x2="291.5" y2="1080" stroke="#525252" stroke-width="1"/>
<line x1="409.5" y1="1040.25" x2="409.5" y2="1080" stroke="#525252" stroke-width="1"/>
<line x1="526.5" y1="1040.25" x2="526.5" y2="1080" stroke="#525252" stroke-width="1"/>
<line x1="578.5" y1="1040.25" x2="578.5" y2="1080" stroke="#525252" stroke-width="1"/>
<line x1="209.4" y1="1027.5" x2="224.4" y2="1027.5" stroke="#f5a742" stroke-width="2"/><circle cx="216.9" cy="1027.5" r="2.7" fill="#f5a742"/><text x="229.2" y="1030.9" font-size="12.5" font-weight="bold" fill="#ececec" xml:space="preserve" textLength="215.5" lengthAdjust="spacing">4u  (Molino SAG Minera BHP Spence)</text>
<line x1="744.5" y1="1040.5" x2="1211.6" y2="1040.5" stroke="#525252" stroke-width="1"/>
<text x="737.0" y="1039.0" text-anchor="end" dominant-baseline="central" font-size="11.5" font-weight="bold" fill="#f2f2f2">30.00</text>
<line x1="744.5" y1="1075.5" x2="1211.6" y2="1075.5" stroke="#525252" stroke-width="1"/>
<text x="737.0" y="1073.7" text-anchor="end" dominant-baseline="central" font-size="11.5" font-weight="bold" fill="#f2f2f2">25.00</text>
<line x1="744.5" y1="1040.25" x2="744.5" y2="1080" stroke="#525252" stroke-width="1"/>
<line x1="806.5" y1="1040.25" x2="806.5" y2="1080" stroke="#525252" stroke-width="1"/>
<line x1="924.5" y1="1040.25" x2="924.5" y2="1080" stroke="#525252" stroke-width="1"/>
<line x1="1042.5" y1="1040.25" x2="1042.5" y2="1080" stroke="#525252" stroke-width="1"/>
<line x1="1159.5" y1="1040.25" x2="1159.5" y2="1080" stroke="#525252" stroke-width="1"/>
<line x1="1211.5" y1="1040.25" x2="1211.5" y2="1080" stroke="#525252" stroke-width="1"/>
<line x1="842.5" y1="1027.5" x2="857.5" y2="1027.5" stroke="#f0666c" stroke-width="2"/><circle cx="850.0" cy="1027.5" r="2.7" fill="#f0666c"/><text x="862.3" y="1030.9" font-size="12.5" font-weight="bold" fill="#ececec" xml:space="preserve" textLength="215.5" lengthAdjust="spacing">6u  (Molino SAG Minera BHP Spence)</text>
<line x1="1378.6" y1="1040.5" x2="1766.4" y2="1040.5" stroke="#525252" stroke-width="1"/>
<text x="1371.1" y="1039.0" text-anchor="end" dominant-baseline="central" font-size="11.5" font-weight="bold" fill="#f2f2f2">30.00</text>
<line x1="1378.6" y1="1076.5" x2="1766.4" y2="1076.5" stroke="#525252" stroke-width="1"/>
<text x="1371.1" y="1074.4" text-anchor="end" dominant-baseline="central" font-size="11.5" font-weight="bold" fill="#f2f2f2">25.00</text>
<line x1="1378.5" y1="1040.25" x2="1378.5" y2="1080" stroke="#525252" stroke-width="1"/>
<line x1="1527.5" y1="1040.25" x2="1527.5" y2="1080" stroke="#525252" stroke-width="1"/>
<line x1="1723.5" y1="1040.25" x2="1723.5" y2="1080" stroke="#525252" stroke-width="1"/>
<line x1="1766.5" y1="1040.25" x2="1766.5" y2="1080" stroke="#525252" stroke-width="1"/>
<line x1="1433.5" y1="1027.5" x2="1448.5" y2="1027.5" stroke="#f5a742" stroke-width="2"/><circle cx="1441.0" cy="1027.5" r="2.7" fill="#f5a742"/><text x="1453.3" y="1030.9" font-size="12.5" font-weight="bold" fill="#ececec" xml:space="preserve" textLength="222.5" lengthAdjust="spacing">14u  (Molino SAG Minera BHP Spence)</text>
</svg>
</body></html>
